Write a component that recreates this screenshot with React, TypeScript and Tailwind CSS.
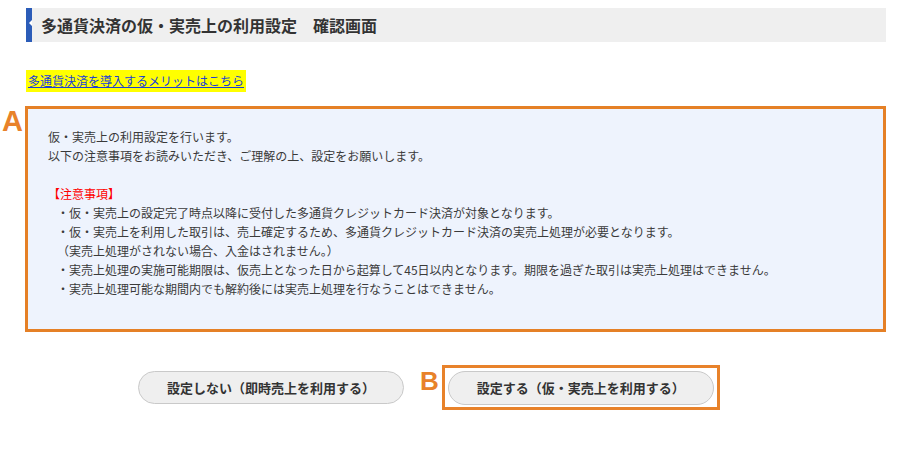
const FONT = "font-['Noto_Sans_CJK_JP','Noto_Sans',sans-serif]";

const notes = [
  "・仮・実売上の設定完了時点以降に受付した多通貨クレジットカード決済が対象となります。",
  "・仮・実売上を利用した取引は、売上確定するため、多通貨クレジットカード決済の実売上処理が必要となります。",
  "（実売上処理がされない場合、入金はされません。）",
  "・実売上処理の実施可能期限は、仮売上となった日から起算して45日以内となります。期限を過ぎた取引は実売上処理はできません。",
  "・実売上処理可能な期間内でも解約後には実売上処理を行なうことはできません。",
];

function Marker({ label, size }: { label: string; size: string }) {
  return (
    <span className={`font-['Liberation_Sans',sans-serif] font-bold leading-none text-[#e8822a] ${size}`}>
      {label}
    </span>
  );
}

export default function App() {
  return (
    <div className={`min-h-[470px] w-[910px] bg-white pt-[8px] text-[#333] ${FONT}`}>
      <div className="ml-[26px] w-[860px]">
        <h1 className="relative flex h-[34px] items-center border-l-[6px] border-[#2b5cb8] bg-[#efefef] pl-[9px] text-[16px] font-bold text-[#333]">
          <span className="absolute left-[-3px] top-[12px] h-0 w-0 border-y-[3px] border-r-[3px] border-y-transparent border-r-white" />
          多通貨決済の仮・実売上の利用設定　確認画面
        </h1>

        <a
          href="#"
          className="mt-[28px] inline-block bg-[#ffff00] px-[2px] text-[12px] leading-[22px] text-[#1a3fd6] underline"
        >
          多通貨決済を導入するメリットはこちら
        </a>
      </div>

      <div className="mt-[14px] flex">
        <div className="flex w-[25px] justify-center pt-[1px]">
          <Marker label="A" size="text-[29px]" />
        </div>
        <div className="w-[861px] border-[3px] border-[#e58026] bg-[#eef3fd] pb-[31px] pl-[20px] pt-[18px] text-[12px] leading-[19px] text-[#3a3a3a]">
          <p>仮・実売上の利用設定を行います。</p>
          <p>以下の注意事項をお読みいただき、ご理解の上、設定をお願いします。</p>
          <p className="mt-[19px] text-[#ff0000]">【注意事項】</p>
          <ul className="pl-[9px]">
            {notes.map((n) => (
              <li key={n}>{n}</li>
            ))}
          </ul>
        </div>
      </div>

      <div className="mt-[33px] flex items-start pl-[138px]">
        <button
          type="button"
          className="mt-[6px] h-[33px] w-[266px] rounded-full border border-[#c9c9c9] bg-[#efefef] text-[13px] font-bold text-[#333]"
        >
          設定しない（即時売上を利用する）
        </button>
        <div className="ml-[16px] mr-[3px] pt-[3px]">
          <Marker label="B" size="text-[26px]" />
        </div>
        <div className="border-[3px] border-[#e8822a] px-[3px] pb-[2px] pt-[3px]">
          <button
            type="button"
            className="block h-[34px] w-[266px] rounded-full border border-[#c9c9c9] bg-[#efefef] text-[13px] font-bold text-[#333]"
          >
            設定する（仮・実売上を利用する）
          </button>
        </div>
      </div>
    </div>
  );
}
